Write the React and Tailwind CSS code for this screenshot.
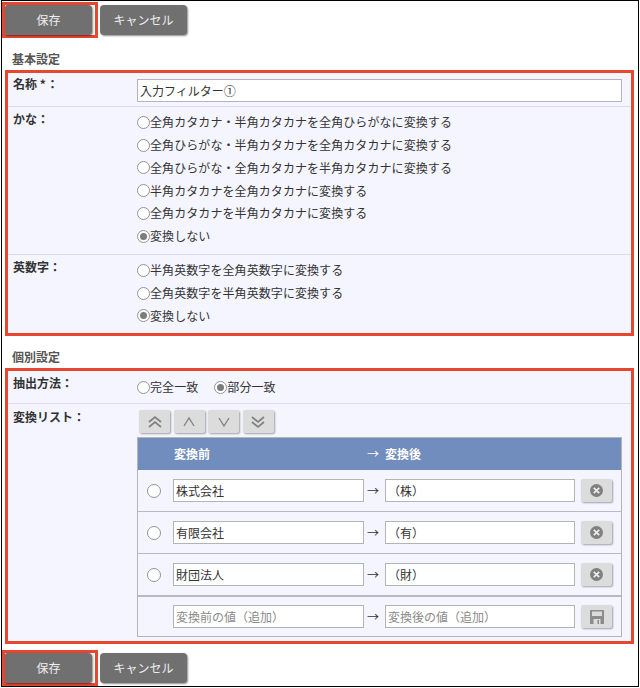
const FONT = "font-['Noto_Sans_CJK_JP','Liberation_Sans',sans-serif]";

const kanaOptions = [
  "全角カタカナ・半角カタカナを全角ひらがなに変換する",
  "全角ひらがな・半角カタカナを全角カタカナに変換する",
  "全角ひらがな・全角カタカナを半角カタカナに変換する",
  "半角カタカナを全角カタカナに変換する",
  "全角カタカナを半角カタカナに変換する",
  "変換しない",
];

const alphaOptions = [
  "半角英数字を全角英数字に変換する",
  "全角英数字を半角英数字に変換する",
  "変換しない",
];

const rules = [
  ["株式会社", "（株）"],
  ["有限会社", "（有）"],
  ["財団法人", "（財）"],
];

function Radio({ checked }) {
  return (
    <span className="w-[13px] h-[13px] shrink-0 rounded-full border border-[#949494] bg-white flex items-center justify-center">
      {checked && <span className="w-[7px] h-[7px] rounded-full bg-[#7c7c7c]"></span>}
    </span>
  );
}

function RadioLine({ label, checked }) {
  return (
    <div className="h-[22.75px] flex items-center text-[12px] tracking-[0.08px] text-[#333333]">
      <Radio checked={checked} />
      <span>{label}</span>
    </div>
  );
}

function Row({ label, labelClass, className, children }) {
  return (
    <div className={`flex ${className}`}>
      <div className={`w-[129px] shrink-0 pl-[5px] text-[12px] font-bold text-[#333333] ${labelClass || ""}`}>{label}</div>
      <div className="flex-1 min-w-0 pr-[9px]">{children}</div>
    </div>
  );
}

function ActionBar() {
  return (
    <div className="flex items-start">
      <div className="w-[96px] h-[36px] border-[3px] border-[#e8472f]">
        <button className="w-[87px] h-[30px] bg-[#707070] rounded-r-[4px] rounded-tl-[2px] shadow-[1px_1px_2px_rgba(0,0,0,0.45)] text-[12px] text-[#eeeeee]">保存</button>
      </div>
      <button className="ml-[2px] mt-[3px] w-[87px] h-[30px] bg-[#707070] rounded-[4px] shadow-[1px_1px_2px_rgba(0,0,0,0.45)] text-[12px] text-[#eeeeee]">キャンセル</button>
    </div>
  );
}

function GrayButton({ className, children }) {
  return (
    <button className={`h-[23px] w-[31px] shrink-0 bg-[#dcdcdc] rounded-[2px] shadow-[1px_1px_2px_rgba(0,0,0,0.35)] flex items-center justify-center ${className || ""}`}>
      {children}
    </button>
  );
}

function MoveIcon({ double, up }) {
  let lines;
  if (double) {
    lines = up
      ? ["2,7 8,2 14,7", "2,12 8,7 14,12"]
      : ["2,2 8,7 14,2", "2,7 8,12 14,7"];
  } else {
    lines = up ? ["3,11 8,3 13,11"] : ["3,3 8,11 13,3"];
  }
  return (
    <svg width="16" height="14" viewBox="0 0 16 14" fill="none" stroke="#808080" strokeWidth={double ? "1.7" : "1.3"}>
      {lines.map((p) => (
        <polyline key={p} points={p} />
      ))}
    </svg>
  );
}

function DeleteIcon() {
  return (
    <svg width="13" height="13" viewBox="0 0 13 13">
      <circle cx="6.5" cy="6.5" r="6.5" fill="#808080" />
      <path d="M3.8 3.8l5.4 5.4M9.2 3.8l-5.4 5.4" stroke="#ececec" strokeWidth="1.7" fill="none" />
    </svg>
  );
}

function SaveIcon() {
  return (
    <svg width="14" height="14" viewBox="0 0 14 14">
      <path d="M0 0h14v14H0z" fill="#8c8c8c" />
      <path d="M2 1.5h10v4.5H2z" fill="#dcdcdc" />
      <path d="M3.5 9h7v5h-7z" fill="#dcdcdc" />
      <path d="M7.5 10h1.5v4H7.5z" fill="#8c8c8c" />
    </svg>
  );
}

function TextBox({ className, value, placeholder }) {
  return (
    <input
      readOnly
      value={value || ""}
      placeholder={placeholder}
      className={`h-[23px] bg-white border border-[#b4b4b4] px-[2px] text-[12px] text-[#333333] placeholder:text-[#8a8a8a] outline-none ${className}`}
    />
  );
}

function Arrow() {
  return <span className="w-[21px] shrink-0 pl-[3px] text-[12px] text-[#333333]">→</span>;
}

function RuleRow({ from, to }) {
  return (
    <div className="h-[42px] flex items-center border-b border-[#b9b9c4]">
      <div className="w-[35px] shrink-0 flex justify-center pr-[3px]">
        <span className="w-[14px] h-[14px] rounded-full border border-[#949494] bg-white"></span>
      </div>
      <TextBox className="w-[191px]" value={from} />
      <Arrow />
      <TextBox className="w-[190px]" value={to} />
      <GrayButton className="ml-[6px]"><DeleteIcon /></GrayButton>
    </div>
  );
}

export default function App() {
  return (
    <div className={`${FONT} ml-px w-[638px] h-[687px] border border-black bg-white pt-px overflow-hidden`} lang="ja">
      <ActionBar />

      <h3 className="h-[32px] pl-[10px] flex items-end pb-[2px] text-[12px] font-bold text-[#555555]">基本設定</h3>
      <div className="ml-[3px] mr-[4px] h-[266px] border-[3px] border-[#e8472f] bg-[#f5f5ff]">
        <Row label="名称 *&#8202;：" labelClass="-mt-[2px]" className="h-[34px] pt-[4px] border-b border-[#dcdcf0]">
          <TextBox className="w-full" value="入力フィルター①" />
        </Row>
        <Row label="かな：" labelClass="-mt-[1px]" className="h-[148px] pt-[4px] border-b border-[#dcdcf0]">
          {kanaOptions.map((o, i) => (
            <RadioLine key={o} label={o} checked={i === 5} />
          ))}
        </Row>
        <Row label="英数字：" labelClass="-mt-[1px]" className="pt-[4px]">
          {alphaOptions.map((o, i) => (
            <RadioLine key={o} label={o} checked={i === 2} />
          ))}
        </Row>
      </div>

      <h3 className="h-[32px] pl-[10px] flex items-end pb-[2px] text-[12px] font-bold text-[#555555]">個別設定</h3>
      <div className="ml-[3px] mr-[4px] h-[276px] border-[3px] border-[#e8472f] bg-[#f5f5ff]">
        <Row label="抽出方法：" className="h-[33px] pt-[3px] border-b border-[#dcdcf0]">
          <div className="flex mt-[2px]">
            <div className="mr-[16px]"><RadioLine label="完全一致" /></div>
            <RadioLine label="部分一致" checked />
          </div>
        </Row>
        <Row label="変換リスト：" labelClass="mt-[2px]" className="pt-[2px]">
          <div className="flex gap-[3.5px] pl-[2px] mt-[4px]">
            <GrayButton><MoveIcon double up /></GrayButton>
            <GrayButton><MoveIcon up /></GrayButton>
            <GrayButton><MoveIcon /></GrayButton>
            <GrayButton><MoveIcon double /></GrayButton>
          </div>
          <div className="mt-[4px] h-[200px] border border-[#b4b4b4]">
            <div className="h-[32px] flex items-center bg-[#718dbd] text-[12px] font-bold text-white">
              <span className="w-[35px] shrink-0"></span>
              <span className="w-[191px] shrink-0 pl-px">変換前</span>
              <span className="w-[21px] shrink-0 pl-[3px] font-normal">→</span>
              <span>変換後</span>
            </div>
            {rules.map(([from, to]) => (
              <RuleRow key={from} from={from} to={to} />
            ))}
            <div className="h-[40px] flex items-center border-t border-[#b9b9c4]">
              <span className="w-[35px] shrink-0"></span>
              <TextBox className="w-[191px]" placeholder="変換前の値（追加）" />
              <Arrow />
              <TextBox className="w-[190px]" placeholder="変換後の値（追加）" />
              <GrayButton className="ml-[6px]"><SaveIcon /></GrayButton>
            </div>
          </div>
        </Row>
      </div>

      <div className="mt-[6px]">
        <ActionBar />
      </div>
    </div>
  );
}
